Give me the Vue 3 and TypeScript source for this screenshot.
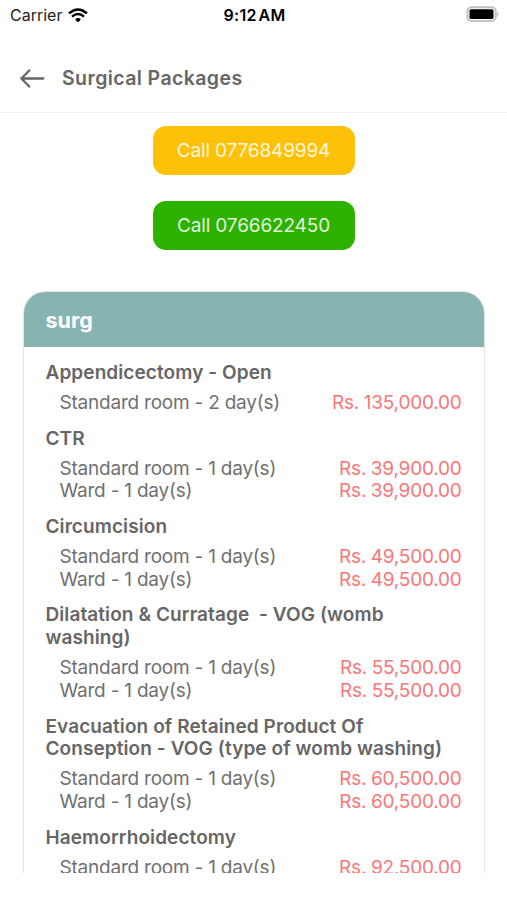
<script setup lang="ts">
interface Rate { room: string; price: string }
interface Pack { title: string[]; rates: Rate[] }

const both = (price: string): Rate[] => [
  { room: 'Standard room - 1 day(s)', price },
  { room: 'Ward - 1 day(s)', price },
]

const packages: Pack[] = [
  { title: ['Appendicectomy - Open'], rates: [{ room: 'Standard room - 2 day(s)', price: 'Rs. 135,000.00' }] },
  { title: ['CTR'], rates: both('Rs. 39,900.00') },
  { title: ['Circumcision'], rates: both('Rs. 49,500.00') },
  { title: ['Dilatation & Curratage  - VOG (womb', 'washing)'], rates: both('Rs. 55,500.00') },
  { title: ['Evacuation of Retained Product Of', 'Conseption - VOG (type of womb washing)'], rates: both('Rs. 60,500.00') },
  { title: ['Haemorrhoidectomy'], rates: [{ room: 'Standard room - 1 day(s)', price: 'Rs. 92,500.00' }] },
]
</script>

<template>
  <div class="screen">
    <div class="status">
      <div class="carrier">
        <span>Carrier</span>
        <svg width="20" height="15" viewBox="0 0 20 15">
          <path d="M1 5.4Q10-2.4 19 5.4" fill="none" stroke="#000" stroke-width="2.5" />
          <path d="M4 8.6Q10 3.4 16 8.6" fill="none" stroke="#000" stroke-width="2.4" />
          <path d="M7.2 11.1Q10 8.9 12.8 11.1Q12.6 12.6 10 14.2Q7.4 12.6 7.2 11.1Z" />
        </svg>
      </div>
      <span class="clock">9:12 AM</span>
      <svg class="battery" width="33" height="16" viewBox="0 0 33 16">
        <rect x="1.5" y="1.2" width="28.2" height="13.8" rx="4" fill="none" stroke="#c2c2c2" stroke-width="2" />
        <rect x="3.5" y="3.2" width="24" height="9.8" rx="1.6" />
        <path d="M31.3 6Q32.5 6.5 32.5 8.1T31.3 10.2Z" fill="#aaa" />
      </svg>
    </div>
    <header class="header">
      <svg width="26" height="20" viewBox="0 0 26 20" fill="none" stroke="#666" stroke-width="2.3" stroke-linecap="round" stroke-linejoin="round">
        <path d="M24.3 10.5H2.5M10.3 2.5L2.3 10.5L10.3 18.5" />
      </svg>
      <h1>Surgical Packages</h1>
    </header>
    <main class="content">
      <button class="call amber">Call 0776849994</button>
      <button class="call green">Call 0766622450</button>
      <section class="card">
        <h2>surg</h2>
        <div class="list">
          <article v-for="pack in packages" :key="pack.title[0]" class="pack">
            <h3><span v-for="line in pack.title" :key="line">{{ line }}</span></h3>
            <div v-for="rate in pack.rates" :key="rate.room" class="rate">
              <span>{{ rate.room }}</span>
              <span class="price">{{ rate.price }}</span>
            </div>
          </article>
        </div>
      </section>
    </main>
  </div>
</template>

<style>
body { margin: 0; background: #fff; }
</style>
<style scoped>
* { box-sizing: border-box; }
.screen { width: 507px; height: 900px; display: flex; flex-direction: column; overflow: hidden; background: #fff; color: #666; font-family: Inter, sans-serif; padding-bottom: 27px; }
.status { height: 44px; flex: none; display: grid; grid-template-columns: 1fr auto 1fr; align-items: start; padding: 5px 8px 0 10px; color: #222; font-size: 16px; line-height: 20px; }
.carrier { display: flex; align-items: center; gap: 6px; }
.clock { font-weight: 600; color: #000; letter-spacing: .25px; word-spacing: -2.4px; }
.battery { justify-self: end; margin-top: 1px; }
.header { height: 69px; flex: none; display: flex; align-items: center; gap: 17px; padding: 0 19px; border-bottom: 1px solid #f1f1f1; }
h1, h2, h3 { margin: 0; font-weight: 600; }
h1 { font-size: 19.5px; line-height: 24px; letter-spacing: .4px; }
.content { flex: 1; min-height: 0; overflow: hidden; display: flex; flex-direction: column; align-items: center; padding-top: 13px; }
.call { width: 202px; height: 49px; flex: none; border: 0; border-radius: 13px; padding: 0; color: rgba(255, 255, 255, .88); font: 400 19px Inter, sans-serif; letter-spacing: -.15px; margin-bottom: 26px; }
.amber { background: #ffc107; }
.green { background: #2db200; }
.card { width: 462px; flex: none; margin-top: 15px; border: 1px solid #e6e6e6; border-radius: 22px 22px 0 0; overflow: hidden; }
h2 { height: 54px; background: #87b3b1; color: #fff; font-size: 21.5px; font-weight: 700; line-height: 56px; padding-left: 22px; }
h2 { height: 55px; }
.list { padding: 15.1px 22px 0; }
.pack { margin-bottom: 12.8px; }
h3 { font-size: 19px; line-height: 22.8px; margin-bottom: 7.2px; letter-spacing: .09px; }
h3 span { display: block; white-space: pre; }
.rate { display: flex; justify-content: space-between; padding-left: 14px; font-size: 19px; line-height: 22.8px; letter-spacing: -.22px; color: #707070; white-space: nowrap; }
.price { color: #fb7676; word-spacing: -.4px; }
</style>
